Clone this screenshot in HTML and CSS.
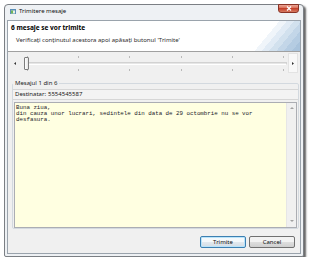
FILE: index.html
```html
<!DOCTYPE html>
<html lang="ro">

<head>
  <meta charset="UTF-8">
  <meta name="viewport" content="width=device-width, initial-scale=1.0">
  <link rel="stylesheet" href="styles.css">
</head>

<body>
  <div class="window">
    <div class="titlebar">
      <svg class="titlebar__icon" viewBox="0 0 6 5">
        <rect x="0" y="0" width="6" height="5" fill="#5a8fb8" />
        <rect x="1" y="1.5" width="4" height="3" fill="#e8f2e0" />
        <rect x="1" y="1.5" width="2" height="3" fill="#6fb35a" />
      </svg>
      <span class="titlebar__title">Trimitere mesaje</span>
      <button class="titlebar__close">
        <svg viewBox="0 0 6 5">
          <path d="M1 0.5 L5 4.5 M5 0.5 L1 4.5" stroke="#fff" stroke-width="1.2" />
        </svg>
      </button>
    </div>

    <div class="client">
      <header class="header">
        <div class="header__title">6 mesaje se vor trimite</div>
        <div class="header__hint">Verificați conținutul acestora apoi apăsați butonul 'Trimite'</div>
      </header>

      <div class="slider-row">
        <span class="slider-row__arrow">
          <svg viewBox="0 0 2 3"><path d="M2 0 L0 1.5 L2 3 Z" fill="#333" /></svg>
        </span>
        <div class="slider">
          <div class="slider__ticks">
            <span></span><span></span><span></span><span></span><span></span><span></span>
          </div>
          <div class="slider__track"></div>
          <div class="slider__ticks">
            <span></span><span></span><span></span><span></span><span></span><span></span>
          </div>
          <span class="slider__thumb"></span>
        </div>
        <span class="slider-row__arrow slider-row__arrow--next">
          <svg viewBox="0 0 2 3"><path d="M0 0 L2 1.5 L0 3 Z" fill="#333" /></svg>
        </span>
      </div>

      <fieldset class="message">
        <legend class="message__caption">Mesajul 1 din 6</legend>
        <div class="message__to">
          <span class="message__label">Destinatar:</span>
          <span>5554545587</span>
        </div>
        <div class="message__body">
          <pre class="message__text">Buna ziua,
din cauza unor lucrari, sedintele din data de 29 octombrie nu se vor
desfasura.</pre>
          <div class="scrollbar">
            <svg viewBox="0 0 4 2"><path d="M0 2 L2 0 L4 2 Z" fill="#a0a0a0" /></svg>
            <svg viewBox="0 0 4 2"><path d="M0 0 L2 2 L4 0 Z" fill="#a0a0a0" /></svg>
          </div>
        </div>
      </fieldset>

      <footer class="actions">
        <button class="btn btn--default">Trimite</button>
        <button class="btn">Cancel</button>
      </footer>
    </div>
  </div>
</body>

</html>
```

FILE: styles.css
```css
* {
  box-sizing: border-box;
}

body {
  margin: 0;
  background-color: #fff;
  font-family: "Noto Sans", "Open Sans", sans-serif;
  font-size: 6px;
  color: #1a1a1a;
}

.window {
  display: flex;
  flex-direction: column;
  width: 300px;
  height: 253px;
  margin: 4px 0 0 4px;
  border: 1px solid #7b7f84;
  border-radius: 4px 4px 2px 2px;
  background-color: #eef1f4;
  box-shadow: 2px 2px 2px rgba(0, 0, 0, 0.6);
}

.titlebar {
  display: flex;
  align-items: flex-start;
  height: 15px;
  padding-left: 5px;
}

.titlebar__icon {
  width: 6px;
  height: 5px;
  margin-top: 4px;
}

.titlebar__title {
  margin-left: 3px;
  line-height: 13px;
  color: #111;
}

.titlebar__close {
  display: flex;
  align-items: center;
  justify-content: center;
  width: 21px;
  height: 9px;
  margin: -1px 4px 0 auto;
  padding: 0;
  border: 1px solid #8a3326;
  border-radius: 0 0 3px 3px;
  background: linear-gradient(#eba696, #d8674f 50%, #c4402a 50%, #d77a62);
}

.titlebar__close svg {
  width: 6px;
  height: 5px;
}

.client {
  display: flex;
  flex-direction: column;
  flex: 1;
  min-height: 0;
  margin: 0 2px 2px;
  border: 1px solid #9aa3ac;
  background-color: #f0f0f0;
}

.header {
  position: relative;
  height: 31px;
  padding: 2px 0 0 3px;
  border-bottom: 1px solid #a0a0a0;
  background-color: #fff;
  overflow: hidden;
}

/* stepped blue fan in the corner of the banner */
.header::after {
  content: "";
  position: absolute;
  right: 0;
  bottom: 0;
  width: 66px;
  height: 30px;
  background: linear-gradient(130deg,
      transparent 0 50%, #f0f5fa 50% 58%, #e1ebf5 58% 66%, #d2e1ee 66% 74%,
      #c3d6e8 74% 82%, #b5cce2 82% 91%, #a9c3dc 91%);
}

.header__title {
  font-weight: 700;
  font-size: 6.5px;
  line-height: 9px;
  color: #000;
}

.header__hint {
  margin: 4px 0 0 5px;
  line-height: 9px;
  color: #2c2c2c;
}

.slider-row {
  display: flex;
  align-items: center;
  height: 22px;
  padding: 0 2px 0 1px;
}

.slider-row__arrow {
  display: flex;
  align-items: center;
  justify-content: center;
  align-self: stretch;
  width: 11px;
  margin: 1px 0;
}

.slider-row__arrow svg {
  width: 2px;
  height: 3px;
}

.slider-row__arrow--next {
  width: 10px;
  border: 1px solid #e3e3e3;
  background-color: #f8f8f8;
}

.slider {
  position: relative;
  flex: 1;
  height: 100%;
  padding-top: 4px;
}

.slider__ticks {
  display: flex;
  justify-content: space-between;
  height: 2px;
  padding: 0 4px 0 7px;
}

.slider__ticks span {
  width: 1px;
  background-color: #b9b9b9;
}

.slider__track {
  height: 3px;
  margin: 4px 1px 4px 5px;
  border: 1px solid #d2d2d2;
  border-bottom-color: #fff;
  background-color: #e6e6e6;
}

.slider__thumb {
  position: absolute;
  left: 4px;
  top: 5px;
  width: 5px;
  height: 13px;
  border: 1px solid #7c7c7c;
  border-radius: 1px;
  background: linear-gradient(to right, #fff, #e4e4e4);
}

.message {
  display: flex;
  flex-direction: column;
  height: 151px;
  margin: 4px 1px 0 4px;
  padding: 1px 0 0;
  border: 1px solid #d3d9df;
  border-radius: 2px;
  min-width: 0;
}

.message__caption {
  padding: 0 2px;
  margin-left: 0;
  line-height: 10px;
  color: #1a1a1a;
}

.message__to {
  display: flex;
  gap: 7px;
  height: 11px;
  padding-left: 2px;
  border-top: 1px solid #d6d6d6;
  border-bottom: 1px solid #d6d6d6;
  background-color: #f3f3f3;
  line-height: 9px;
}

.message__label {
  width: 26px;
}

.message__body {
  display: flex;
  height: 126px;
  margin: 2px 1px 0;
  border: 1px solid #abadb3;
  background-color: #ffffe1;
}

.message__text {
  flex: 1;
  margin: 0;
  padding: 2px 0 0 1px;
  font-family: "Liberation Mono", "DejaVu Sans Mono", monospace;
  font-size: 5.8px;
  line-height: 6px;
  color: #1b1b2a;
  overflow: hidden;
}

.scrollbar {
  display: flex;
  flex-direction: column;
  justify-content: space-between;
  align-items: center;
  width: 10px;
  padding: 4px 0 5px;
  border-left: 1px solid #e6e6e6;
  background-color: #f0f0f0;
}

.scrollbar svg {
  width: 4px;
  height: 2px;
}

.actions {
  display: flex;
  justify-content: flex-end;
  gap: 3px;
  flex: 1;
  padding: 7px 5px 0 0;
}

.btn {
  width: 46px;
  height: 12px;
  padding: 0;
  border: 1px solid #707070;
  border-radius: 2px;
  background: linear-gradient(#f2f2f2 0 45%, #dddddd 55%, #cfcfcf);
  font-family: inherit;
  font-size: 6px;
  line-height: 10px;
  color: #111;
}

.btn--default {
  border-color: #3c7fb1;
  box-shadow: inset 0 0 0 1px #b9e4fb;
  background: linear-gradient(#f4f8fb 0 45%, #e1e8ee 55%, #d3dce4);
}
```
